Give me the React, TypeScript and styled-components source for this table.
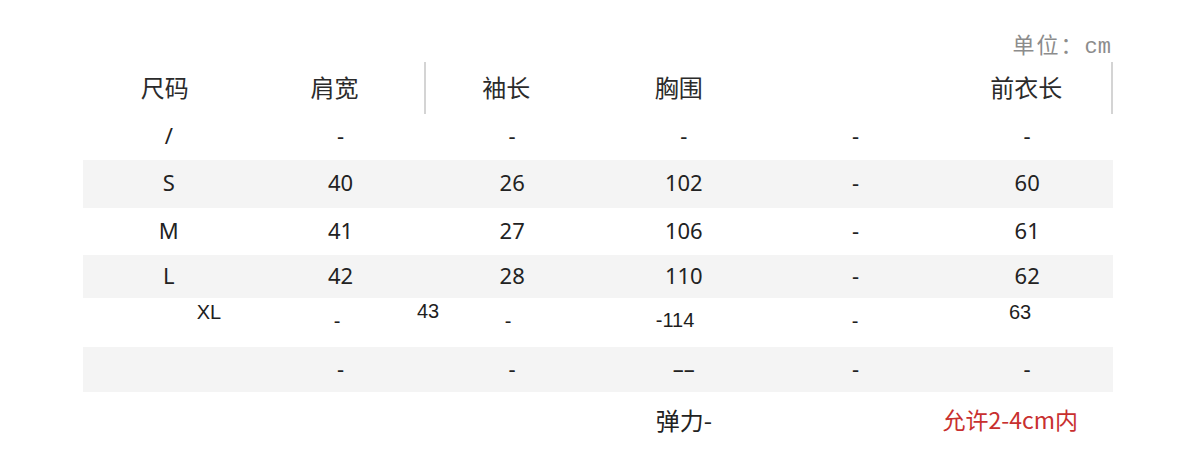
import React from "react";
import styled, { createGlobalStyle } from "styled-components";

const GlobalStyle = createGlobalStyle`
  html, body {
    margin: 0;
    padding: 0;
    background: #ffffff;
  }
  body {
    font-family: "Noto Sans", "Noto Sans CJK SC", sans-serif;
    color: #222;
  }
`;

interface Row {
  cells: string[];
  height: number;
  shaded: boolean;
}

// 일반 행 데이터
const rows: Row[] = [
  { cells: ["/", "-", "-", "-", "-", "-"], height: 46, shaded: false },
  { cells: ["S", "40", "26", "102", "-", "60"], height: 48, shaded: true },
  { cells: ["M", "41", "27", "106", "-", "61"], height: 47, shaded: false },
  { cells: ["L", "42", "28", "110", "-", "62"], height: 43, shaded: true },
];

const headers = [
  { label: "尺码", nudge: 6, divider: false },
  { label: "肩宽", nudge: 10, divider: true },
  { label: "袖长", nudge: 10, divider: false },
  { label: "胸围", nudge: 8, divider: false },
  { label: "", nudge: 0, divider: false },
  { label: "前衣长", nudge: 0, divider: true },
];

// XL 행은 원본처럼 칸이 어긋나 있음
const xlCells = [
  { text: "XL", top: 2 },
  { text: "-", top: 11 },
  { text: "43", top: 1 },
  { text: "-", top: 11 },
  { text: "-114", top: 10 },
  { text: "-", top: 11 },
  { text: "63", top: 2 },
];

const App: React.FC = () => {
  return (
    <Page>
      <GlobalStyle />
      <UnitLine>
        单位：<UnitMono>cm</UnitMono>
      </UnitLine>
      <Table>
        <HeaderRow>
          {headers.map((h, i) => (
            <HeaderCell key={i} $nudge={h.nudge} $divider={h.divider}>
              {h.label}
            </HeaderCell>
          ))}
        </HeaderRow>

        {rows.map((row, r) => (
          <DataRow key={r} $height={row.height} $shaded={row.shaded}>
            {row.cells.map((c, i) => (
              <Cell key={i}>{c}</Cell>
            ))}
          </DataRow>
        ))}

        <XlRow>
          {xlCells.map((c, i) => (
            <XlCell key={i} $top={c.top}>
              {c.text}
            </XlCell>
          ))}
        </XlRow>

        <DataRow $height={45} $shaded>
          <Cell />
          <Cell>-</Cell>
          <Cell>-</Cell>
          <Cell>––</Cell>
          <Cell>-</Cell>
          <Cell>-</Cell>
        </DataRow>

        <NoteRow>
          <Cell />
          <Cell />
          <Cell />
          <NoteCell>弹力-</NoteCell>
          <Cell />
          <NoteCell $red>允许2-4cm内</NoteCell>
        </NoteRow>
      </Table>
    </Page>
  );
};

const Page = styled.div`
  width: 1200px;
  height: 476px;
  padding-top: 30px;
  box-sizing: border-box;
  overflow: hidden;
`;

const UnitLine = styled.div`
  width: 1111px;
  text-align: right;
  font-family: "Noto Sans CJK SC", sans-serif;
  font-size: 22px;
  line-height: 26px;
  letter-spacing: 2px;
  color: #8c8c8c;
  height: 32px;
`;

const UnitMono = styled.span`
  font-family: "Liberation Mono", "DejaVu Sans Mono", monospace;
  font-size: 22px;
  letter-spacing: 0;
`;

const Table = styled.div`
  margin-left: 83px;
  width: 1030px;
  display: flex;
  flex-direction: column;
`;

const HeaderRow = styled.div`
  display: grid;
  grid-template-columns: repeat(6, 1fr);
  height: 52px;
`;

const HeaderCell = styled.div<{ $nudge: number; $divider: boolean }>`
  display: flex;
  align-items: center;
  justify-content: center;
  padding-right: ${(p) => p.$nudge}px;
  padding-bottom: 4px;
  font-family: "Noto Sans CJK SC", sans-serif;
  font-size: 24px;
  color: #2b2b2b;
  border-right: 2px solid ${(p) => (p.$divider ? "#d4d4d4" : "transparent")};
`;

const DataRow = styled.div<{ $height: number; $shaded?: boolean }>`
  display: grid;
  grid-template-columns: repeat(6, 1fr);
  height: ${(p) => p.$height}px;
  background: ${(p) => (p.$shaded ? "#f4f4f4" : "transparent")};
`;

const Cell = styled.div`
  display: flex;
  align-items: center;
  justify-content: center;
  padding-bottom: 4px;
  font-family: "Noto Sans", "Noto Sans CJK SC", sans-serif;
  font-size: 22px;
  color: #222;
  white-space: nowrap;
`;

const XlRow = styled.div`
  display: grid;
  grid-template-columns: 110px 146px 36px 124px 210px 150px 180px;
  padding-left: 71px;
  height: 49px;
  align-items: start;
  justify-items: center;
`;

const XlCell = styled.div<{ $top: number }>`
  padding-top: ${(p) => p.$top}px;
  font-family: "Liberation Sans", Arial, sans-serif;
  font-size: 20px;
  line-height: 24px;
  color: #1e1e1e;
  white-space: nowrap;
`;

const NoteRow = styled.div`
  display: grid;
  grid-template-columns: repeat(6, 1fr);
  height: 58px;
`;

const NoteCell = styled.div<{ $red?: boolean }>`
  display: flex;
  align-items: center;
  justify-content: center;
  padding-right: ${(p) => (p.$red ? 34 : 0)}px;
  padding-bottom: 4px;
  font-family: "Noto Sans CJK SC", sans-serif;
  font-size: ${(p) => (p.$red ? 23 : 24)}px;
  color: ${(p) => (p.$red ? "#c8302f" : "#222")};
  white-space: nowrap;
`;

export default App;
